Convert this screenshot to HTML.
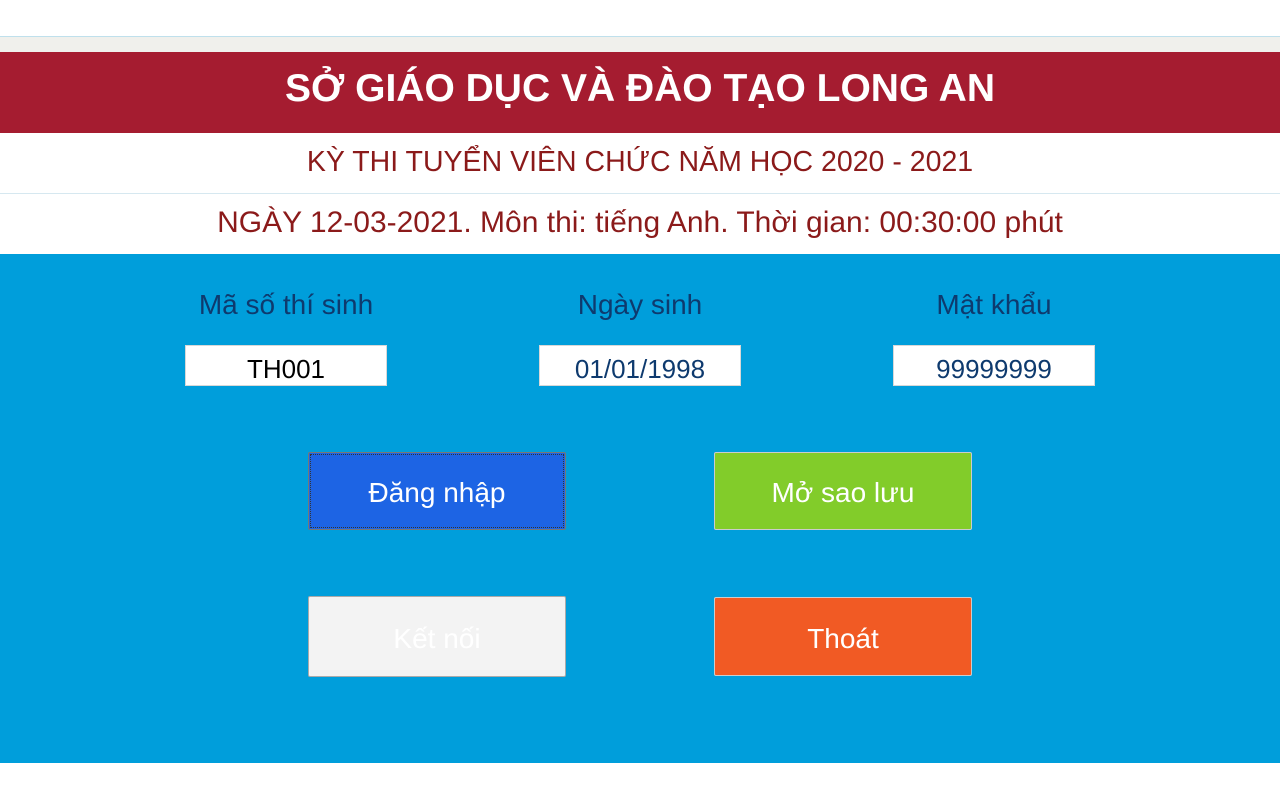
<!DOCTYPE html>
<html><head><meta charset="utf-8"><style>
body{margin:0;width:1280px;height:800px;background:#fff;font-family:"Liberation Sans","DejaVu Sans",sans-serif;position:relative;overflow:hidden}
div{position:absolute;box-sizing:border-box}
.c{text-align:center;left:0;width:1280px}
.lab{color:#0e3a6e;font-size:28px;width:300px;text-align:center;top:288px;line-height:34px}
.inp{background:#fff;border:1px solid #d8d8d8;top:345px;width:202px;height:41px;font-size:26px;text-align:center;line-height:46px}
.btn{width:258px;font-size:28px;color:#fff;text-align:center;border:1px solid #777;border-radius:2px}
</style></head><body>
<div style="top:36px;left:0;width:1280px;height:1px;background:#bfe0ec"></div>
<div style="top:37px;left:0;width:1280px;height:15px;background:#f0f0ec"></div>
<div style="top:52px;left:0;width:1280px;height:81px;background:#a51c30"></div>
<div class="c" style="top:64px;color:#fff;font-weight:bold;font-size:39px;line-height:50px">SỞ GIÁO DỤC VÀ ĐÀO TẠO LONG AN</div>
<div class="c" style="top:143px;color:#8b1a1a;font-size:28.5px;line-height:38px">KỲ THI TUYỂN VIÊN CHỨC NĂM HỌC 2020 - 2021</div>
<div style="top:193px;left:0;width:1280px;height:1px;background:#d6e8f0"></div>
<div class="c" style="top:203px;color:#8b1a1a;font-size:30px;line-height:40px">NGÀY 12-03-2021. Môn thi: tiếng Anh. Thời gian: 00:30:00 phút</div>
<div style="top:254px;left:0;width:1280px;height:509px;background:#009edb"></div>
<div class="lab" style="left:136px">Mã số thí sinh</div>
<div class="lab" style="left:490px">Ngày sinh</div>
<div class="lab" style="left:844px">Mật khẩu</div>
<div class="inp" style="left:185px;color:#000">TH001</div>
<div class="inp" style="left:539px;color:#0e3a6e">01/01/1998</div>
<div class="inp" style="left:893px;color:#0e3a6e">99999999</div>
<div class="btn" style="left:308px;top:452px;height:78px;line-height:80px;background:#1d64e4;outline:1px dotted #333;outline-offset:-3px">Đăng nhập</div>
<div class="btn" style="left:714px;top:452px;height:78px;line-height:80px;background:#82cc2a;border-color:#ccc">Mở sao lưu</div>
<div class="btn" style="left:308px;top:596px;height:81px;line-height:83px;background:#f3f3f3;border-color:#aaa">Kết nối</div>
<div class="btn" style="left:714px;top:597px;height:79px;line-height:81px;background:#f15a24;border-color:#ccc">Thoát</div>
</body></html>
